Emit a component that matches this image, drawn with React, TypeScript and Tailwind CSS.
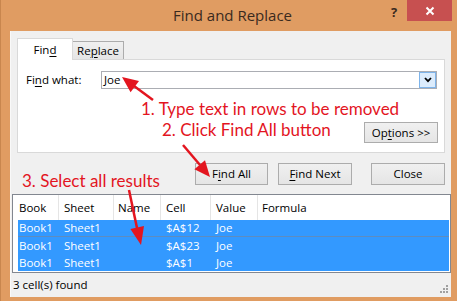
import React from "react";

const Btn = ({ children, className = "" }: { children: React.ReactNode; className?: string }) => (
  <div
    className={
      "flex items-center justify-center bg-gradient-to-b from-[#F0F0F0] to-[#E5E5E5] border border-[#ACACAC] text-[11.5px] text-black " +
      className
    }
  >
    {children}
  </div>
);

const U = ({ children }: { children: React.ReactNode }) => (
  <span className="underline underline-offset-2 decoration-1">{children}</span>
);

export default function App() {
  const rows = [
    ["Book1", "Sheet1", "", "$A$12", "Joe"],
    ["Book1", "Sheet1", "", "$A$23", "Joe"],
    ["Book1", "Sheet1", "", "$A$1", "Joe"],
  ];
  return (
    <div className="relative w-[457px] h-[301px] overflow-hidden bg-[#E09C62] border-l border-[#C8864E] font-['Open_Sans',sans-serif] text-black">
      {/* Title bar */}
      <div className="flex h-[31px] items-start">
        <div className="flex-1 pl-[73px] pt-[4px] text-center text-[15px] text-[#3A2A1E]">Find and Replace</div>
        <div className="pt-[3px] w-[14px] text-[13px] font-bold text-[#3A2A1E]">?</div>
        <div className="ml-[2px] mr-[5px] flex h-[21px] w-[45px] items-center justify-center bg-[#C75050]">
          <svg width="10" height="10" viewBox="0 0 10 10">
            <path d="M1.5 1.5 L8.5 8.5 M8.5 1.5 L1.5 8.5" stroke="white" strokeWidth="2" />
          </svg>
        </div>
      </div>

      {/* Client area */}
      <div className="ml-[9px] flex h-[266px] w-[441px] flex-col bg-[#F0F0F0] border-l border-[#F9F9F9]">
        {/* Tabs */}
        <div className="ml-[6px] mt-[7px] flex h-[21px] items-end">
          <div className="relative z-10 -mb-px flex h-[22px] w-[56px] items-start justify-center border border-b-0 border-[#D9D9D9] bg-white pt-[2px] text-[11.5px]">
            <span>
              Fin<U>d</U>
            </span>
          </div>
          <div className="flex h-[18px] w-[51px] items-center justify-center border border-b-0 border-l-0 border-[#ACACAC] bg-gradient-to-b from-[#F0F0F0] to-[#E5E5E5] text-[11.5px]">
            <span>
              Re<U>p</U>lace
            </span>
          </div>
        </div>

        {/* Panel */}
        <div className="ml-[6px] flex h-[94px] w-[428px] flex-col border border-[#D9D9D9] bg-white">
          <div className="mt-[11px] flex items-center pl-[8px]">
            <div className="w-[75px] text-[11.5px]">
              Fi<U>n</U>d what:
            </div>
            <div className="flex h-[18px] w-[336px] items-center border border-[#ABADB3] bg-white">
              <span className="pl-[2px] text-[11.5px]">Joe</span>
              <div className="ml-auto flex h-[16px] w-[17px] items-center justify-center border border-[#7EB4EA] bg-[#DCECFC]">
                <svg width="8" height="6" viewBox="0 0 8 6">
                  <path d="M1 1 L4 4.2 L7 1" stroke="black" strokeWidth="1.8" fill="none" />
                </svg>
              </div>
            </div>
          </div>
          <div className="mt-[33px] flex justify-end pr-[6px]">
            <Btn className="h-[21px] w-[74px]">
              <span>
                Op<U>t</U>ions &gt;&gt;
              </span>
            </Btn>
          </div>
        </div>

        {/* Buttons */}
        <div className="mt-[10px] flex justify-end pr-[6px]">
          <Btn className="h-[22px] w-[73px]">
            <span>
              F<U>i</U>nd All
            </span>
          </Btn>
          <Btn className="ml-[10px] h-[22px] w-[74px] border-[#3C8FDB]">
            <span>
              <U>F</U>ind Next
            </span>
          </Btn>
          <Btn className="ml-[19px] h-[22px] w-[74px]">Close</Btn>
        </div>

        {/* Results table */}
        <div className="ml-[1px] mt-[9px] flex h-[79px] w-[439px] flex-col border border-[#828790] bg-white text-[11.5px]">
          <div className="flex h-[25px] items-center">
            <div className="w-[45px] pl-[6px]">Book</div>
            <div className="flex h-full w-[55px] items-center border-l border-[#E5E5E5] pl-[5px]">Sheet</div>
            <div className="flex h-full w-[47px] items-center border-l border-[#E5E5E5] pl-[4px]">Name</div>
            <div className="flex h-full w-[50px] items-center border-l border-[#E5E5E5] pl-[5px]">Cell</div>
            <div className="flex h-full w-[47px] items-center border-l border-[#E5E5E5] pl-[5px]">Value</div>
            <div className="flex h-full flex-1 items-center border-l border-[#E5E5E5] pl-[4px]">Formula</div>
          </div>
          {rows.map((r, i) => (
            <div
              key={i}
              className={
                "ml-[5px] mr-[1px] flex h-[17px] items-center bg-[#3399FF] text-white " +
                (i === 0 ? "border-b border-[#5E8CBF]" : "")
              }
            >
              <div className="w-[40px] pl-[1px]">{r[0]}</div>
              <div className="w-[55px] pl-[6px]">{r[1]}</div>
              <div className="w-[47px] pl-[5px]">{r[2]}</div>
              <div className="w-[50px] pl-[6px]">{r[3]}</div>
              <div className="w-[47px] pl-[6px]">{r[4]}</div>
            </div>
          ))}
        </div>

        {/* Status bar */}
        <div className="flex flex-1 items-center pl-[2px] text-[11.5px]">
          <span>3 cell(s) found</span>
          <svg className="ml-auto mr-[2px] mt-[8px]" width="9" height="9" viewBox="0 0 9 9">
            <g fill="#A0A0A0">
              <rect x="6" y="0" width="2" height="2" />
              <rect x="3" y="3" width="2" height="2" />
              <rect x="6" y="3" width="2" height="2" />
              <rect x="0" y="6" width="2" height="2" />
              <rect x="3" y="6" width="2" height="2" />
              <rect x="6" y="6" width="2" height="2" />
            </g>
          </svg>
        </div>
      </div>

      {/* Annotations (overlay) */}
      <div className="pointer-events-none absolute left-[140px] top-[98px] whitespace-nowrap font-['Lato',sans-serif] text-[17px] leading-[22px] text-[#E3151F]">
        1. Type text in rows to be removed
      </div>
      <div className="pointer-events-none absolute left-[161px] top-[119px] whitespace-nowrap font-['Lato',sans-serif] text-[17px] leading-[22px] text-[#E3151F]">
        2. Click Find All button
      </div>
      <div className="pointer-events-none absolute left-[21px] top-[170px] whitespace-nowrap font-['Lato',sans-serif] text-[17px] leading-[22px] text-[#E3151F]">
        3. Select all results
      </div>
      <svg className="pointer-events-none absolute left-0 top-0" width="457" height="301" viewBox="0 0 457 301">
        <g stroke="#E3151F" strokeWidth="2.5" fill="#E3151F">
          <line x1="152" y1="100" x2="133" y2="86" />
          <polygon points="121,77 138,81 129.6,92.2" stroke="none" />
          <line x1="182" y1="145" x2="199" y2="165" />
          <polygon points="209,177 204,160.3 193.4,169.3" stroke="none" />
          <line x1="128" y1="190" x2="136" y2="228" />
          <polygon points="140,245 143,225.9 129.4,228.9" stroke="none" />
        </g>
      </svg>
    </div>
  );
}
